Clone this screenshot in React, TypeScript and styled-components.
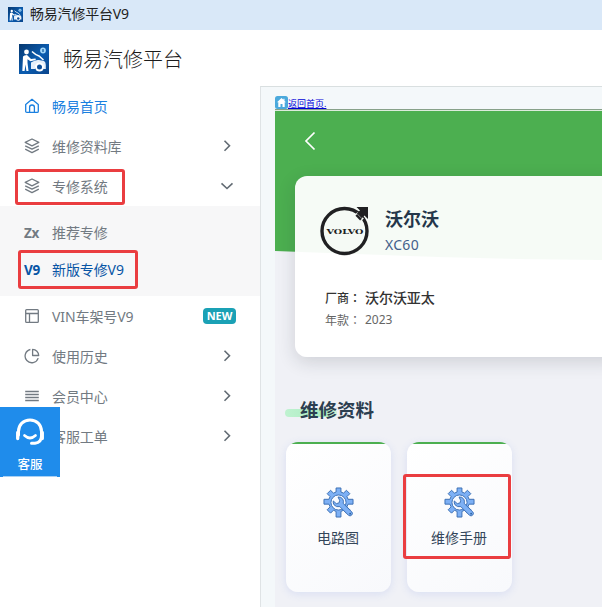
import React from "react";
import styled, { createGlobalStyle, css } from "styled-components";

const GlobalStyle = createGlobalStyle`
  * { box-sizing: border-box; }
  body {
    margin: 0;
    background: #fff;
    overflow: hidden;
    font-family: "Noto Sans", "Noto Sans CJK SC", sans-serif;
  }
`;

const Window = styled.div`
  position: relative;
  width: 602px;
  height: 607px;
  overflow: hidden;
  display: flex;
  flex-direction: column;
  background: #fff;
`;

const TitleBar = styled.header`
  height: 30px;
  flex: none;
  display: flex;
  align-items: center;
  gap: 7px;
  padding: 0 8px 1px;
  background: #d9e8f8;
  color: #222;
  font-size: 14px;
  line-height: 20px;
`;

const TitleText = styled.span`
  margin-top: -2px;
  letter-spacing: -0.2px;
`;

const BrandBar = styled.div`
  height: 56px;
  flex: none;
  display: flex;
  align-items: center;
  gap: 14px;
  padding: 1px 19px 0;
  color: #1c1c1c;
  font-size: 20px;
  font-weight: 300;
  line-height: 28px;
`;

const BrandName = styled.span`
  padding-top: 2px;
`;

const Main = styled.div`
  flex: 1;
  display: flex;
  min-height: 0;
`;

const Sidebar = styled.nav`
  width: 260px;
  flex: none;
  display: flex;
  flex-direction: column;
`;

const MenuRow = styled.div<{ $color?: string; $height?: number }>`
  height: ${(p) => p.$height ?? 40}px;
  flex: none;
  display: flex;
  align-items: center;
  padding: 0 24px;
  color: ${(p) => p.$color ?? "#727a82"};
  font-size: 14px;
  line-height: 20px;
  svg { flex: none; }
`;

const MenuLabel = styled.span`
  flex: 1;
  margin-left: 12px;
  padding-top: 2px;
  white-space: nowrap;
  letter-spacing: -0.1px;
`;

const Submenu = styled.div`
  height: 90px;
  flex: none;
  padding-top: 8px;
  background: #f7f7f8;
  ${MenuLabel} { padding-top: 0; }
`;

const CodeMark = styled.b`
  width: 16px;
  flex: none;
  font-family: "Noto Sans", sans-serif;
  font-size: 13.5px;
  letter-spacing: -0.3px;
  white-space: nowrap;
`;

const NewBadge = styled.span`
  width: 33px;
  height: 16px;
  border-radius: 4px;
  background: #1aa1b5;
  color: #fff;
  font: bold 11px/16px "Noto Sans", sans-serif;
  text-align: center;
`;

const ChevronSlot = styled.span`
  width: 18px;
  height: 16px;
`;

const Content = styled.main`
  flex: 1;
  min-width: 0;
  border-left: 1px solid #dfe3e5;
  border-top: 1px solid #d9dfe0;
  background: #f4f8fa;
  padding: 9px 0 0 14px;
`;

const Page = styled.div`
  height: 100%;
  display: flex;
  flex-direction: column;
`;

const ReturnBar = styled.div`
  height: 15px;
  flex: none;
  display: flex;
  align-items: flex-start;
  border-bottom: 1px solid #dcebdc;
  box-shadow: inset 0 -1px #87a189;
`;

const ReturnLink = styled.a`
  font-size: 9px;
  line-height: 13px;
  margin-top: 1px;
  color: #0000d8;
  text-decoration: underline;
  text-underline-offset: 1px;
`;

const Body = styled.div`
  flex: 1;
  background: #f0f1f6;
`;

const Hero = styled.div`
  height: 149px;
  background: #4caf50;
  clip-path: polygon(0 0, 100% 0, 100% 100%, 75% 99.3%, 50% 98%, 0 94%);
  padding: 20px 29px;
`;

const VehicleCard = styled.section`
  position: relative;
  height: 181px;
  margin: -84px -20px 0 20px;
  padding: 28px 0 0 24px;
  border-radius: 12px;
  background: rgba(255, 255, 255, 0.95);
  box-shadow: 0 5px 18px rgba(30, 35, 50, 0.16);
`;

const VehicleHead = styled.div`
  display: flex;
  align-items: flex-start;
  gap: 14px;
  height: 82px;
`;

const VehicleName = styled.h1`
  margin: 2px 0 0;
  color: #24364a;
  font-size: 18px;
  line-height: 26px;
  font-weight: 700;
`;

const VehicleModel = styled.div`
  color: #42608a;
  font-size: 14px;
  line-height: 25px;
  letter-spacing: 0.3px;
`;

const Detail = styled.div<{ $strong?: boolean }>`
  display: flex;
  margin-left: 6px;
  height: 22px;
  line-height: 23px;
  font-size: 12px;
  color: #666;
  ${(p) => p.$strong && css`color: #333; font-weight: 500;`}
`;

const DetailKey = styled.span`
  width: 40px;
  white-space: nowrap;
`;

const Colon = styled.span`
  font-family: "Noto Sans CJK TC", sans-serif;
`;

const DetailValue = styled.span<{ $large?: boolean }>`
  font-size: ${(p) => (p.$large ? 14 : 12)}px;
  letter-spacing: -0.05px;
`;

const SectionTitle = styled.h2`
  position: relative;
  z-index: 0;
  height: 28px;
  margin: 39px 0 0 25px;
  color: #2c3e50;
  font-size: 18.5px;
  line-height: 28px;
  font-weight: 700;
  white-space: nowrap;
  &::before {
    content: "";
    position: absolute;
    z-index: -1;
    left: -15px;
    top: 13px;
    width: 52px;
    height: 8px;
    border-radius: 4px;
    background: linear-gradient(90deg, #bff2d0, #a9ecc0 75%, #cdf1d9);
  }
`;

const ManualGrid = styled.div`
  display: grid;
  grid-template-columns: 105px 105px;
  gap: 16px;
  margin: 18px 0 0 11px;
`;

const ManualCard = styled.article`
  height: 150px;
  display: flex;
  flex-direction: column;
  align-items: center;
  padding: 45px 1px 0 0;
  border-radius: 12px;
  background: linear-gradient(#4caf50, #4caf50) 0 0 / 100% 2px no-repeat,
    linear-gradient(145deg, #fff, #f8f9fc);
  box-shadow: 0 2px 8px rgba(76, 110, 230, 0.14);
  color: #34465a;
  font-size: 14px;
  line-height: 22px;
`;

const ManualName = styled.span`
  margin-top: 9px;
`;

const SupportButton = styled.button`
  position: absolute;
  left: 0;
  top: 407px;
  width: 60px;
  height: 70px;
  border: 0;
  padding: 11px 0 0;
  display: flex;
  flex-direction: column;
  align-items: center;
  background: linear-gradient(#a9d0f3, #a9d0f3) 3px 69px / 54px 1px no-repeat, #1f8ceb;
  color: #fff;
  font-family: inherit;
  font-size: 12.5px;
  line-height: 18px;
  font-weight: 500;
  gap: 8px;
`;

const Highlight = styled.div<{ $x: number; $y: number; $w: number; $h: number }>`
  position: absolute;
  left: ${(p) => p.$x}px;
  top: ${(p) => p.$y}px;
  width: ${(p) => p.$w}px;
  height: ${(p) => p.$h}px;
  border: 3px solid #ea3d40;
  border-radius: 3px;
`;

const Logo = ({ size }: { size: number }) => (
  <svg width={size} height={size} viewBox="0 0 30 30">
    <defs>
      <linearGradient id={`logo${size}`} x2="1" y2="1">
        <stop stopColor="#06386f" />
        <stop offset=".55" stopColor="#0b5cb0" />
        <stop offset="1" stopColor="#0a458b" />
      </linearGradient>
    </defs>
    <rect width="30" height="30" fill={`url(#logo${size})`} />
    <circle cx="7.500" cy="8" r="2.400" fill="#fff" />
    <path d="M4 12.500q1-1.500 4-1.500l4 4 4.500-.6.300 1.500-5.300 1.300-3-2v3.500l1 8.300H7.400l-.9-6.500-.9 6.500H3.300Z" fill="#fff" />
    <path d="M12 18.500q4-3 8-2.500l5 1q1.800 1 1.800 4v4h-2.300a4.500 4.500 0 0 0-8.500 0h-4Z" fill="#e5effa" />
    <path d="M13 7.500q3 3 7 4.500l4.500 4" fill="none" stroke="#fff" strokeWidth="1.500" />
    <circle cx="20.500" cy="23" r="4.500" fill="#fff" />
    <circle cx="20.500" cy="23" r="2.500" fill="#0b4d98" />
    <circle cx="24" cy="6.500" r="2.900" fill="#a4d7f8" />
    <path d="M24 5v3" stroke="#0c559f" strokeWidth="1.200" />
  </svg>
);

const icons = {
  home: <path d="M1.700 6.600 8 1.300l6.300 5.300v6.600q0 1.200-1.200 1.200H2.900q-1.200 0-1.200-1.200ZM5.600 14.300V9.200q0-2.200 2.400-2.200t2.400 2.200v5.100" />,
  layers: <path d="M8 1 14.800 4.400 8 7.800 1.200 4.400ZM1.200 7.800 8 11.200l6.800-3.400M1.200 11.200 8 14.600l6.800-3.400" />,
  layout: <path d="M2.600 1.700h10.800q.9 0 .9.900v10.800q0 .9-.9.900H2.600q-.9 0-.9-.9V2.600q0-.9.900-.9ZM1.700 5.500h12.600M5.500 5.500v8.800" />,
  chart: <path d="M6.400 1.500a6.700 6.700 0 1 0 7.800 8.600M8.600 1.300v6.200h6.100A6.300 6.300 0 0 0 8.600 1.300Z" />,
  lines: <path d="M1.200 3.500h13.600M1.200 6.500h13.600M1.200 9.500h13.600M1.200 12.500h13.600" />,
};

const MenuIcon = ({ name }: { name: keyof typeof icons }) => (
  <svg width="16" height="16" viewBox="0 0 16 16" fill="none" stroke="currentColor" strokeWidth="1.300" strokeLinejoin="round">
    {icons[name]}
  </svg>
);

const Chevron = ({ down }: { down?: boolean }) => (
  <ChevronSlot>
    <svg width="18" height="16" fill="none" stroke="#626b73" strokeWidth="1.600">
      <path d={down ? "M3.500 5.300 9 10.500l5.500-5.200" : "m6.500 2.800 5 5-5 5"} />
    </svg>
  </ChevronSlot>
);

const HomeBadge = () => (
  <svg width="13" height="13" viewBox="0 0 13 13">
    <rect width="13" height="13" rx="2.500" fill="#4ba9dc" />
    <path d="M6.500 2 2 6.300h1.300V11h2.200V8h2v3h2.200V6.300H11L9.500 4.900V2.800H8.400v1Z" fill="#fff" />
  </svg>
);

const VolvoMark = () => (
  <svg width="52" height="54" viewBox="0 0 52 54">
    <ellipse cx="26" cy="29" rx="23" ry="22.500" fill="#d9e1da" opacity=".35" />
    <circle cx="25.500" cy="27" r="22.500" fill="#f5faf5" stroke="#202022" strokeWidth="3.400" />
    <path d="M36.300 10.200 42.500 16.800" stroke="#f5faf5" strokeWidth="6.500" />
    <path d="M37.500 3H49v12l-3.500-3.500-2.700 2.700-5-5 3.200-2.700Z" fill="#202022" />
    <path d="m37.300 10.800 4.700 4.800" stroke="#202022" strokeWidth="2.400" />
    <text x="26" y="29.500" textAnchor="middle" textLength="37" lengthAdjust="spacingAndGlyphs" fontFamily="DejaVu Serif" fontWeight="700" fontSize="6.800" fill="#202022">VOLVO</text>
  </svg>
);

const GearWrench = () => (
  <svg width="31" height="31" viewBox="0 0 32 32">
    <g fill="#7db0f5" stroke="#3c70b4" strokeWidth="1">
      <path d="M13.500 1h5v4.200l2.700 1.100 3-2.900 3.500 3.500-3 3 1.200 2.800H31v5h-5.100l-1.200 2.800 3 3-3.500 3.500-3-3-2.700 1.200V31h-5v-5.800L10.800 24l-3 3-3.500-3.500 3-3-1.200-2.800H1v-5h5.100l1.200-2.800-3-3 3.500-3.500 3 2.900 2.700-1.100Z" strokeLinejoin="round" />
      <circle cx="16" cy="16" r="7.800" fill="#f8faff" />
      <path d="M15.500 10.300q3.300-.3 5 2.300 1 2 .3 4.300l9 8.900q1.300 1.500-.2 3.200-1.600 1.600-3.300.2l-8.900-8.900q-3.800.8-6-1.900-1.200-1.800-.8-4l3.100 2.800 2.900-.8.600-2.600Z" />
    </g>
    <circle cx="28" cy="27.500" r=".9" fill="#295c99" />
  </svg>
);

const Headset = () => (
  <svg width="30" height="30" viewBox="0 0 30 30" fill="none" stroke="#fff" strokeLinecap="round">
    <path d="M3.500 17v-3.500C3.500 6.500 8.500 2 15 2s11.500 4.500 11.500 11.500V18q0 6.500-6.500 7.200h-3.500" strokeWidth="3" />
    <path d="M2.700 14.500v6M27.300 14.500v6" strokeWidth="3.300" />
    <path d="M9.500 17.500q5.500 5 11 0" strokeWidth="2.700" />
  </svg>
);

export default function App() {
  return (
    <>
      <GlobalStyle />
      <Window>
        <TitleBar>
          <Logo size={15} />
          <TitleText>畅易汽修平台V9</TitleText>
        </TitleBar>
        <BrandBar>
          <Logo size={30} />
          <BrandName>畅易汽修平台</BrandName>
        </BrandBar>
        <Main>
          <Sidebar>
            <MenuRow $color="#1a80e0"><MenuIcon name="home" /><MenuLabel>畅易首页</MenuLabel></MenuRow>
            <MenuRow><MenuIcon name="layers" /><MenuLabel>维修资料库</MenuLabel><Chevron /></MenuRow>
            <MenuRow><MenuIcon name="layers" /><MenuLabel>专修系统</MenuLabel><Chevron down /></MenuRow>
            <Submenu>
              <MenuRow $height={37}><CodeMark>Zx</CodeMark><MenuLabel>推荐专修</MenuLabel></MenuRow>
              <MenuRow $height={37} $color="#0855a5"><CodeMark>V9</CodeMark><MenuLabel>新版专修V9</MenuLabel></MenuRow>
            </Submenu>
            <MenuRow><MenuIcon name="layout" /><MenuLabel>VIN车架号V9</MenuLabel><NewBadge>NEW</NewBadge></MenuRow>
            <MenuRow><MenuIcon name="chart" /><MenuLabel>使用历史</MenuLabel><Chevron /></MenuRow>
            <MenuRow><MenuIcon name="lines" /><MenuLabel>会员中心</MenuLabel><Chevron /></MenuRow>
            <MenuRow><MenuIcon name="layers" /><MenuLabel>客服工单</MenuLabel><Chevron /></MenuRow>
          </Sidebar>
          <Content>
            <Page>
              <ReturnBar><HomeBadge /><ReturnLink>返回首页.</ReturnLink></ReturnBar>
              <Body>
                <Hero>
                  <svg width="12" height="20" fill="none" stroke="#fff" strokeWidth="1.700">
                    <path d="M10.500 1.500 2 10l8.500 8.500" />
                  </svg>
                </Hero>
                <VehicleCard>
                  <VehicleHead>
                    <VolvoMark />
                    <div>
                      <VehicleName>沃尔沃</VehicleName>
                      <VehicleModel>XC60</VehicleModel>
                    </div>
                  </VehicleHead>
                  <Detail $strong><DetailKey>厂商<Colon lang="zh-TW">：</Colon></DetailKey><DetailValue $large>沃尔沃亚太</DetailValue></Detail>
                  <Detail><DetailKey>年款<Colon lang="zh-TW">：</Colon></DetailKey><DetailValue>2023</DetailValue></Detail>
                </VehicleCard>
                <SectionTitle>维修资料</SectionTitle>
                <ManualGrid>
                  {["电路图", "维修手册"].map((name) => (
                    <ManualCard key={name}><GearWrench /><ManualName>{name}</ManualName></ManualCard>
                  ))}
                </ManualGrid>
              </Body>
            </Page>
          </Content>
        </Main>
        <SupportButton><Headset /><span>客服</span></SupportButton>
        <Highlight $x={15} $y={169} $w={110} $h={36} />
        <Highlight $x={18} $y={250} $w={120} $h={39} />
        <Highlight $x={403} $y={474} $w={108} $h={85} />
      </Window>
    </>
  );
}
